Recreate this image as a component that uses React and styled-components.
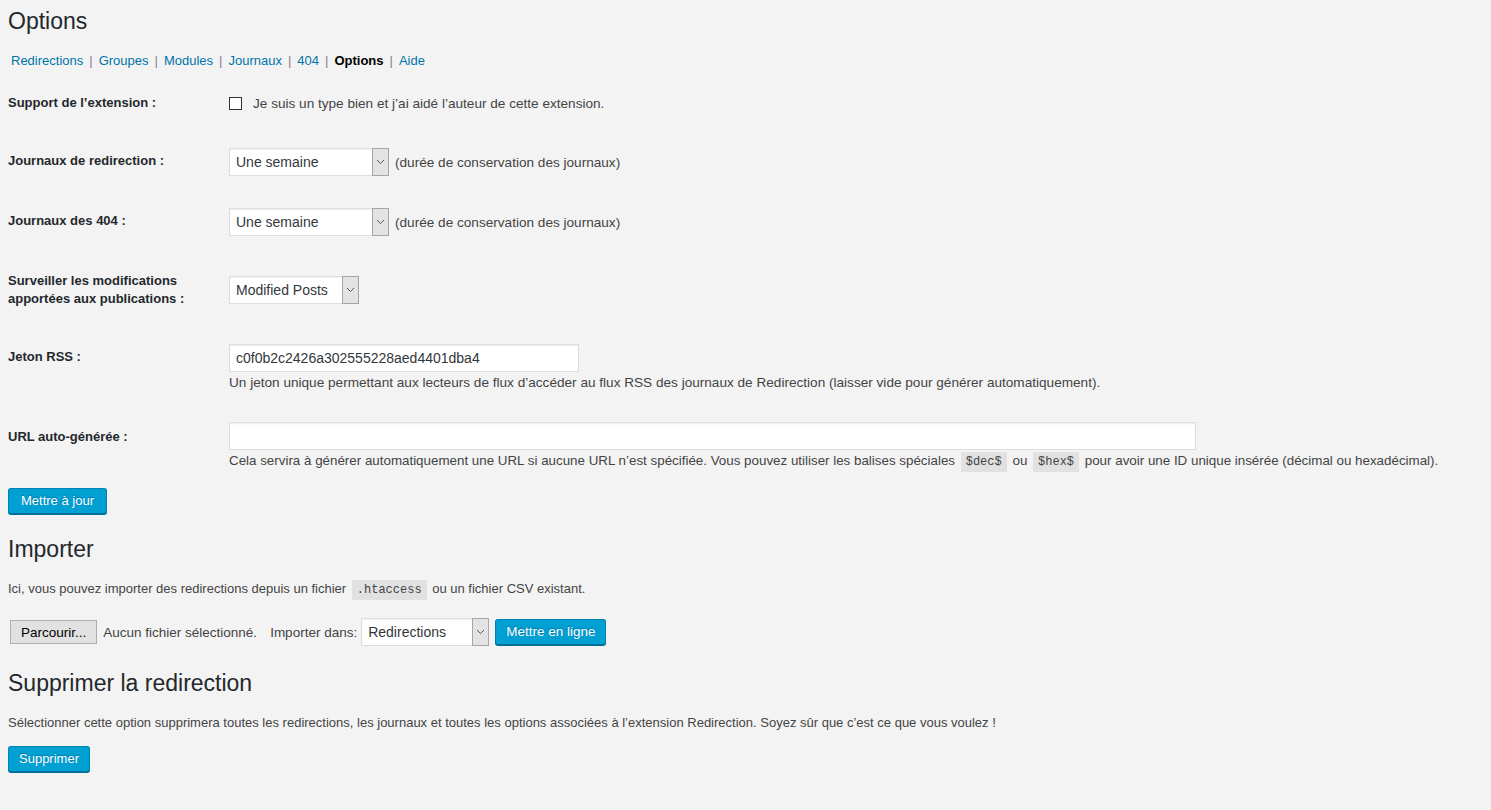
import React from "react";
import styled, { createGlobalStyle } from "styled-components";

const GlobalStyle = createGlobalStyle`
  html, body { margin: 0; padding: 0; }
  body {
    background: #f3f3f3;
    font-family: "Liberation Sans", Arial, sans-serif;
    font-size: 13px;
    color: #444;
  }
  * { box-sizing: border-box; }
`;

const Wrap = styled.div`
  padding: 7px 0 40px 8px;
`;

const Title = styled.h1`
  margin: 0;
  font-size: 23px;
  font-weight: 400;
  line-height: 29px;
  color: #23282d;
`;

const SectionTitle = styled.h2`
  margin: ${(p) => p.$mt}px 0 0;
  font-size: 23px;
  font-weight: 400;
  line-height: 29px;
  color: #23282d;
`;

const Nav = styled.ul`
  display: flex;
  margin: 15px 0 0;
  padding: 0 0 0 3px;
  list-style: none;
  font-size: 13px;
  line-height: 20px;
`;

const NavItem = styled.li`
  display: flex;
  align-items: center;
`;

const NavLink = styled.a`
  color: ${(p) => (p.$current ? "#000" : "#0073aa")};
  font-weight: ${(p) => (p.$current ? 700 : 400)};
  text-decoration: none;
`;

const Sep = styled.span`
  color: #8b7c95;
  margin: 0 6px;
`;

const FormTable = styled.div`
  margin-top: 3px;
`;

const Row = styled.div`
  display: grid;
  grid-template-columns: 221px 1fr;
  align-items: start;
`;

const Label = styled.div`
  padding: 20px 0;
  font-size: 13px;
  font-weight: 700;
  line-height: 18px;
  color: #23282d;
`;

const Field = styled.div`
  padding: ${(p) => p.$pt ?? 15}px 0 15px;
  font-size: 13.6px;
`;

const Line = styled.div`
  display: flex;
  align-items: center;
  min-height: ${(p) => p.$h ?? 30}px;
`;

const Checkbox = styled.span`
  display: inline-block;
  width: 13px;
  height: 13px;
  border: 1px solid #333;
  background: #fff;
  margin-right: 11px;
`;

const Text = styled.span`
  color: #444;
  margin-left: ${(p) => p.$ml ?? 0}px;
`;

const SelectBox = styled.div`
  display: inline-flex;
  width: ${(p) => p.$w}px;
  height: 28px;
  margin: 1px 0;
  margin-left: ${(p) => p.$ml ?? 0}px;
  border: 1px solid #ddd;
  background: #fff;
  box-shadow: inset 0 1px 2px rgba(0, 0, 0, 0.07);
`;

const SelectValue = styled.span`
  flex: 1;
  padding-left: 6px;
  font-size: 14px;
  line-height: 26px;
  color: #32373c;
  white-space: nowrap;
`;

const SelectArrow = styled.span`
  width: 17px;
  display: flex;
  align-items: center;
  justify-content: center;
  background: #e3e3e3;
  border: 1px solid #a6a6a6;
  margin: -1px -1px -1px 0;
`;

const TextInput = styled.div`
  width: ${(p) => p.$w}px;
  height: 28px;
  margin: 1px 0;
  padding: 0 6px;
  border: 1px solid #ddd;
  background: #fff;
  box-shadow: inset 0 1px 2px rgba(0, 0, 0, 0.07);
  font-size: 14px;
  line-height: 26px;
  color: #32373c;
`;

const Description = styled.p`
  margin: 0;
  font-size: ${(p) => p.$fs ?? 13.6}px;
  line-height: 20px;
  color: #444;
`;

const Code = styled.code`
  font-family: "Liberation Mono", Consolas, monospace;
  font-size: 12px;
  padding: 3px 5px;
  margin: 0 2px;
  background: rgba(0, 0, 0, 0.07);
  color: #444;
`;

const PrimaryButton = styled.button`
  display: inline-block;
  height: 26px;
  margin-top: ${(p) => p.$mt ?? 0}px;
  margin-left: ${(p) => p.$ml ?? 0}px;
  padding: 0 ${(p) => p.$px ?? 10}px;
  font-family: inherit;
  font-size: ${(p) => p.$fs ?? 13}px;
  line-height: 24px;
  color: #fff;
  background: #00a0d2;
  border: 1px solid #0083b4;
  border-bottom-color: #006f99;
  border-radius: 3px;
  box-shadow: 0 1px 0 #006f99;
  text-shadow: 0 -1px 1px #0073aa;
  cursor: pointer;
`;

const Para = styled.p`
  margin: 15px 0 0;
  font-size: 13px;
  line-height: 20px;
  color: #444;
`;

const FileRow = styled.div`
  display: flex;
  align-items: center;
  margin-top: 17px;
  font-size: 13.5px;
`;

const FileButton = styled.button`
  height: 24px;
  margin-left: 2px;
  padding: 0 10px;
  font-family: inherit;
  font-size: 13.5px;
  color: #000;
  background: #e1e1e1;
  border: 1px solid #adadad;
`;

const Chevron = () => (
  <svg width="9" height="6" viewBox="0 0 9 6">
    <path d="M1 1 L4.5 4.5 L8 1" fill="none" stroke="#555" strokeWidth="1" />
  </svg>
);

const Select = ({ width, value, ml }) => (
  <SelectBox $w={width} $ml={ml}>
    <SelectValue>{value}</SelectValue>
    <SelectArrow>
      <Chevron />
    </SelectArrow>
  </SelectBox>
);

const navItems = ["Redirections", "Groupes", "Modules", "Journaux", "404", "Options", "Aide"];

export default function App() {
  return (
    <>
      <GlobalStyle />
      <Wrap>
        <Title>Options</Title>
        <Nav>
          {navItems.map((item, i) => (
            <NavItem key={item}>
              <NavLink href="#" $current={item === "Options"}>
                {item}
              </NavLink>
              {i < navItems.length - 1 && <Sep>|</Sep>}
            </NavItem>
          ))}
        </Nav>

        <FormTable>
          <Row>
            <Label>Support de l’extension :</Label>
            <Field>
              <Line $h={28}>
                <Checkbox />
                <Text>Je suis un type bien et j’ai aidé l’auteur de cette extension.</Text>
              </Line>
            </Field>
          </Row>
          <Row>
            <Label>Journaux de redirection :</Label>
            <Field>
              <Line>
                <Select width={160} value="Une semaine" />
                <Text $ml={6}>(durée de conservation des journaux)</Text>
              </Line>
            </Field>
          </Row>
          <Row>
            <Label>Journaux des 404 :</Label>
            <Field>
              <Line>
                <Select width={160} value="Une semaine" />
                <Text $ml={6}>(durée de conservation des journaux)</Text>
              </Line>
            </Field>
          </Row>
          <Row>
            <Label>
              Surveiller les modifications
              <br />
              apportées aux publications :
            </Label>
            <Field $pt={23}>
              <Line>
                <Select width={130} value="Modified Posts" />
              </Line>
            </Field>
          </Row>
          <Row>
            <Label>Jeton RSS :</Label>
            <Field>
              <TextInput $w={350}>c0f0b2c2426a302555228aed4401dba4</TextInput>
              <Description>
                Un jeton unique permettant aux lecteurs de flux d’accéder au flux RSS des journaux de
                Redirection (laisser vide pour générer automatiquement).
              </Description>
            </Field>
          </Row>
          <Row>
            <Label>URL auto-générée :</Label>
            <Field $pt={13}>
              <TextInput $w={967} />
              <Description $fs={13.36}>
                Cela servira à générer automatiquement une URL si aucune URL n’est spécifiée. Vous
                pouvez utiliser les balises spéciales <Code>$dec$</Code> ou <Code>$hex$</Code> pour
                avoir une ID unique insérée (décimal ou hexadécimal).
              </Description>
            </Field>
          </Row>
        </FormTable>

        <PrimaryButton $mt={1} $px={12}>Mettre à jour</PrimaryButton>

        <SectionTitle $mt={21}>Importer</SectionTitle>
        <Para>
          Ici, vous pouvez importer des redirections depuis un fichier <Code>.htaccess</Code> ou un
          fichier CSV existant.
        </Para>
        <FileRow>
          <FileButton>Parcourir...</FileButton>
          <Text $ml={6}>Aucun fichier sélectionné.</Text>
          <Text $ml={13}>Importer dans:</Text>
          <Select width={128} value="Redirections" ml={4} />
          <PrimaryButton $ml={6} $px={10} $fs={13.5}>Mettre en ligne</PrimaryButton>
        </FileRow>

        <SectionTitle $mt={22}>Supprimer la redirection</SectionTitle>
        <Para>
          Sélectionner cette option supprimera toutes les redirections, les journaux et toutes les
          options associées à l’extension Redirection. Soyez sûr que c’est ce que vous voulez !
        </Para>
        <PrimaryButton $mt={13}>Supprimer</PrimaryButton>
      </Wrap>
    </>
  );
}
